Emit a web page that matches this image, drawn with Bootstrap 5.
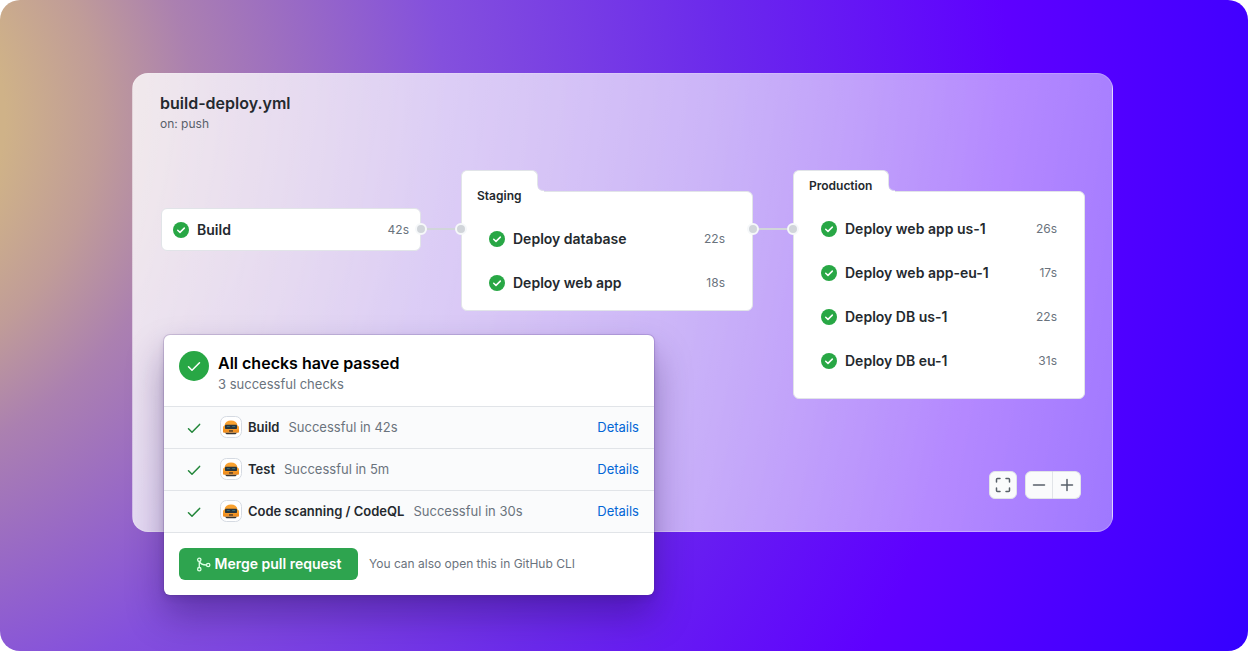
<!DOCTYPE html>
<html lang="en">
<head>
<meta charset="utf-8">
<meta name="viewport" content="width=device-width, initial-scale=1">
<title>build-deploy.yml</title>
<link href="https://cdn.jsdelivr.net/npm/bootstrap@5.3.0/dist/css/bootstrap.min.css" rel="stylesheet">
<style>
  body { font-family: Inter, "Liberation Sans", sans-serif; font-size: 14px; line-height: 20px; color: #24292e; background: #fff; }
  .stage { min-height: 100vh; padding: 73px 135px 56px 132px; border-radius: 20px;
    background: radial-gradient(126% 226% at -16% 18%, #cfb288 13%, #c09c98 19%, #ab80b0 25%, #8450dd 41%, #6b29ec 59%, #5e00ff 77%, #4400ff 91%, #3200ff 100%); }
  .workflow { border-radius: 16px; border: 1px solid rgba(255,255,255,.22); padding: 17px 27px 32px;
    background: linear-gradient(100deg, rgba(255,255,255,.8), rgba(255,255,255,.65) 55%, rgba(255,255,255,.47)); }
  .workflow h1 { font-size: 16px; line-height: 24px; font-weight: 600; }
  .trigger { font-size: 12px; line-height: 18px; color: #586069; }
  .graph { display: grid; grid-template-columns: 260fr 40px 292fr 40px 292fr; padding: 37px 0 0 1px; align-items: start; }
  .job-box { background: #fff; border: 1px solid #e1e4e8; border-radius: 6px; }
  .single { margin-top: 38px; padding: 0 11px; }
  .single .job { height: 41px; }
  .job { height: 44px; font-weight: 600; }
  .job svg { width: 16px; height: 16px; margin-right: 8px; flex: none; }
  .job time { font-size: 12px; font-weight: 400; color: #6a737d; }
  .group-tab { position: relative; z-index: 1; width: fit-content; height: 22px; margin-bottom: -1px; padding: 5px 16px 0 15px; background: #fff;
    border: 1px solid #e1e4e8; border-bottom: 0; border-radius: 6px 6px 0 0; font-size: 12px; font-weight: 600; }
  .group-tab.low { padding-top: 15px; }
  .group-tab svg { position: absolute; left: 100%; bottom: 0; width: 7px; height: 7px; }
  .group-body { border-top-left-radius: 0; padding: 15px 27px; }
  .group-body.two { padding: 25px 27px 5px; }
  .wire { position: relative; z-index: 2; margin: 53px -6px 0 -6px; }
  .wire i { width: 12px; height: 12px; border-radius: 50%; border: 2px solid #f6f8fa; background: #d1d5da; }
  .wire b { flex: 1; height: 2px; background: #d1d5da; }
  .tools { margin: 72px 4px 0 0; gap: 8px; }
  .tool { background: #fafbfc; border: 1px solid #e1e4e8; width: 28px; height: 28px; border-radius: 6px; color: #586069; }
  .tool svg { display: block; flex: none; }
  .tool-out { border-radius: 6px 0 0 6px; }
  .tool-in { border-radius: 0 6px 6px 0; border-left: 0; }
  .checks { position: absolute; left: 32px; top: 262px; width: 490px; background: #fff; border-radius: 6px; color: #24292e;
    box-shadow: 0 0 0 1px rgba(80,50,130,.18), 0 3px 6px rgba(40,20,80,.15), 0 20px 36px rgba(40,10,90,.38); }
  .checks header { height: 71px; padding: 16px 15px 0; gap: 9px; }
  .checks h2 { font-size: 16px; line-height: 24px; font-weight: 600; color: #000; }
  .muted { color: #6a737d; }
  .subline { font-size: 13px; line-height: 18px; }
  .check-row { height: 42px; padding: 0 15px 2px; background: #fafbfc; border-top: 1px solid #e1e4e8; font-size: 13px; }
  .check-row .tick { width: 14px; height: 14px; margin: 2px 19px 0 8px; }
  .check-row strong { font-weight: 600; margin: 0 9px 0 6px; }
  .check-row a { color: #0366d6; text-decoration: none; }
  .checks footer { height: 63px; padding: 0 15px; gap: 11px; border-top: 1px solid #e1e4e8; font-size: 12px; }
  .merge { height: 32px; width: 179px; border: 0; border-radius: 6px; background: #2ea44f; color: #fff; font-size: 14px; font-weight: 600; gap: 4px; }
</style>
</head>
<body>
<svg class="d-none" aria-hidden="true">
  <symbol id="ok" viewBox="0 0 16 16"><circle cx="8" cy="8" r="8" fill="#28a745"/><path d="M4.700 8.300 7 10.400l4.300-4.300" fill="none" stroke="#fff" stroke-width="1.500" stroke-linecap="round" stroke-linejoin="round"/></symbol>
  <symbol id="tick" viewBox="0 0 14 14"><path d="M1.500 7.800 5 11.200 12.600 3.400" fill="none" stroke="#22863a" stroke-width="1.500" stroke-linecap="round" stroke-linejoin="round"/></symbol>
  <symbol id="corner" viewBox="0 0 7 7"><path d="M0 0A6 6 0 0 0 6 6h1v1H0z" fill="#fff"/><path d="M.5 0A5.500 5.500 0 0 0 6 5.500h1" fill="none" stroke="#e1e4e8" stroke-width=".8"/><path d="M-1 0H.2A5.800 5.800 0 0 0 6 6.200h1V7h-8z" fill="#fff"/></symbol>
  <symbol id="bot" viewBox="0 0 22 22"><rect x=".5" y=".5" width="21" height="21" rx="6" fill="#fff" stroke="#d5dae2"/><path d="M3 16V11.500Q3 10 4.500 9.500C5 6.300 7.500 4.500 11 4.500s6 1.800 6.500 5q1.500.5 1.500 2V16z" fill="#f9a12f"/><path d="M3 13.500h16v2.300q0 1-1 1H4q-1 0-1-1z" fill="#f08f20"/><rect x="5" y="8.800" width="12" height="4.200" rx=".8" fill="#27343c"/><path d="M6.800 10.600h3m2.400 0h3" stroke="#3f6f78"/><rect x="9" y="14.200" width="4" height="1.500" fill="#5b422c"/><path d="M5 16.800h12l-1.500 1.400h-9z" fill="#383532"/></symbol>
</svg>
<main class="stage">
  <div class="position-relative">
    <section class="workflow">
      <h1 class="mb-0">build-deploy.yml</h1>
      <p class="trigger mb-0">on: push</p>
      <div class="graph">
        <div class="job-box single"><div class="job d-flex align-items-center"><svg><use href="#ok"/></svg>Build<time class="ms-auto">42s</time></div></div>
        <div class="wire d-flex align-items-center"><i></i><b></b><i></i></div>
        <div>
          <div class="group-tab low">Staging<svg><use href="#corner"/></svg></div>
          <ul class="job-box group-body two list-unstyled mb-0">
            <li class="job d-flex align-items-center"><svg><use href="#ok"/></svg>Deploy database<time class="ms-auto">22s</time></li>
            <li class="job d-flex align-items-center"><svg><use href="#ok"/></svg>Deploy web app<time class="ms-auto">18s</time></li>
          </ul>
        </div>
        <div class="wire d-flex align-items-center"><i></i><b></b><i></i></div>
        <div>
          <div class="group-tab">Production<svg><use href="#corner"/></svg></div>
          <ul class="job-box group-body list-unstyled mb-0">
            <li class="job d-flex align-items-center"><svg><use href="#ok"/></svg>Deploy web app us-1<time class="ms-auto">26s</time></li>
            <li class="job d-flex align-items-center"><svg><use href="#ok"/></svg>Deploy web app-eu-1<time class="ms-auto">17s</time></li>
            <li class="job d-flex align-items-center"><svg><use href="#ok"/></svg>Deploy DB us-1<time class="ms-auto">22s</time></li>
            <li class="job d-flex align-items-center"><svg><use href="#ok"/></svg>Deploy DB eu-1<time class="ms-auto">31s</time></li>
          </ul>
        </div>
      </div>
      <div class="tools d-flex justify-content-end">
        <button type="button" class="tool p-0 d-flex align-items-center justify-content-center" aria-label="Full screen"><svg width="16" height="16" viewBox="0 0 16 16" fill="none" stroke="currentColor" stroke-width="1.500" stroke-linecap="round"><path d="M1.500 5V2.500q0-1 1-1H5M11 1.500h2.500q1 0 1 1V5M14.500 11v2.500q0 1-1 1H11M5 14.500H2.500q-1 0-1-1V11"/></svg></button>
        <div class="d-flex">
          <button type="button" class="tool tool-out p-0 d-flex align-items-center justify-content-center" aria-label="Zoom out"><svg width="14" height="14" viewBox="0 0 14 14" stroke="currentColor" stroke-width="1.500" stroke-linecap="round"><path d="M1.500 7h11"/></svg></button>
          <button type="button" class="tool tool-in p-0 d-flex align-items-center justify-content-center" aria-label="Zoom in"><svg width="14" height="14" viewBox="0 0 14 14" stroke="currentColor" stroke-width="1.500" stroke-linecap="round"><path d="M1.500 7h11M7 1.500v11"/></svg></button>
        </div>
      </div>
    </section>
    <section class="checks">
      <header class="d-flex">
        <svg width="30" height="30" viewBox="0 0 30 30"><circle cx="15" cy="15" r="15" fill="#28a745"/><path d="M9.500 15.800 13 19.300l7.500-7.500" fill="none" stroke="#fff" stroke-width="1.500" stroke-linecap="round" stroke-linejoin="round"/></svg>
        <div><h2 class="mb-0">All checks have passed</h2><p class="subline muted mb-0">3 successful checks</p></div>
      </header>
      <ul class="list-unstyled mb-0">
        <li class="check-row d-flex align-items-center"><svg class="tick"><use href="#tick"/></svg><svg width="22" height="22"><use href="#bot"/></svg><strong>Build</strong><span class="muted">Successful in 42s</span><a href="#" class="ms-auto">Details</a></li>
        <li class="check-row d-flex align-items-center"><svg class="tick"><use href="#tick"/></svg><svg width="22" height="22"><use href="#bot"/></svg><strong>Test</strong><span class="muted">Successful in 5m</span><a href="#" class="ms-auto">Details</a></li>
        <li class="check-row d-flex align-items-center"><svg class="tick"><use href="#tick"/></svg><svg width="22" height="22"><use href="#bot"/></svg><strong>Code scanning / CodeQL</strong><span class="muted">Successful in 30s</span><a href="#" class="ms-auto">Details</a></li>
      </ul>
      <footer class="d-flex align-items-center">
        <button type="button" class="merge p-0 d-flex align-items-center justify-content-center"><svg width="15" height="15" viewBox="0 0 16 16" fill="none" stroke="#dcffe4" stroke-width="1.400"><circle cx="3.500" cy="3" r="1.800"/><circle cx="3.500" cy="13" r="1.800"/><circle cx="13" cy="8.500" r="1.800"/><path d="M3.500 4.800v6.400M3.800 4.800c.9 2.500 3 3.700 7.400 3.700"/></svg>Merge pull request</button>
        <span class="muted">You can also open this in GitHub CLI</span>
      </footer>
    </section>
  </div>
</main>
<script src="https://cdn.jsdelivr.net/npm/bootstrap@5.3.0/dist/js/bootstrap.bundle.min.js"></script>
</body>
</html>
